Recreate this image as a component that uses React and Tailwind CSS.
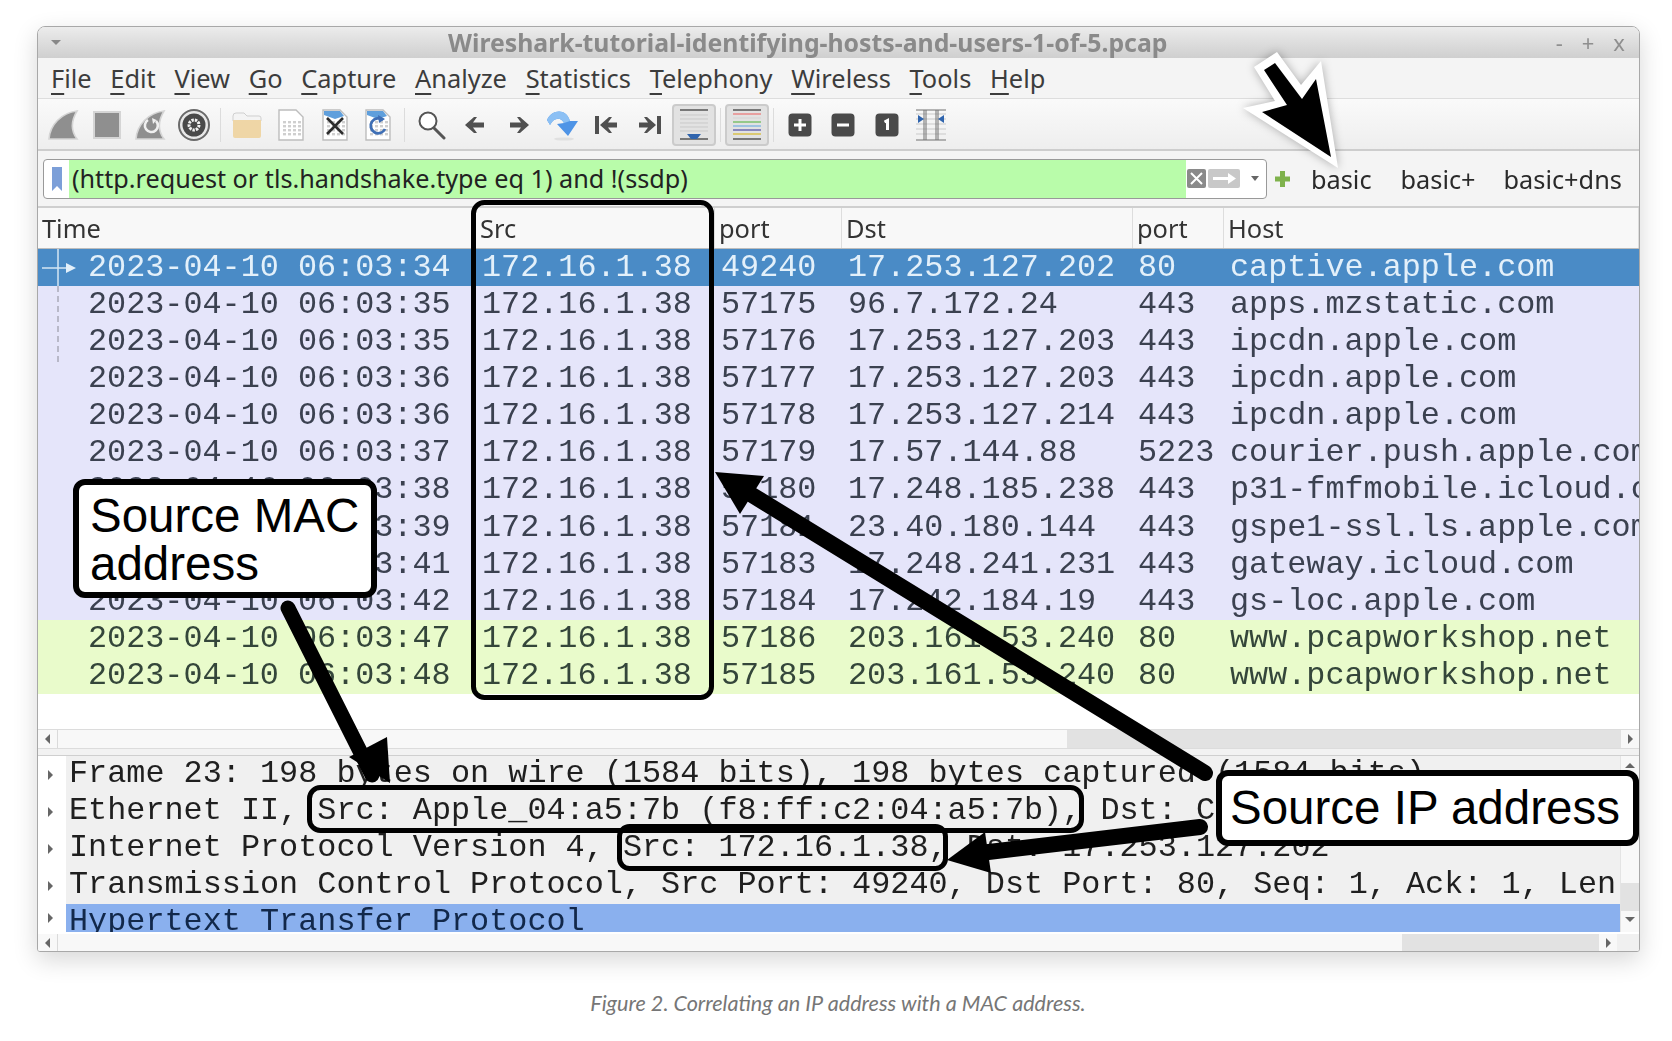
import React from "react";

const rows = [
  ["2023-04-10 06:03:34", "172.16.1.38", "49240", "17.253.127.202", "80", "captive.apple.com", "sel"],
  ["2023-04-10 06:03:35", "172.16.1.38", "57175", "96.7.172.24", "443", "apps.mzstatic.com", "tls"],
  ["2023-04-10 06:03:35", "172.16.1.38", "57176", "17.253.127.203", "443", "ipcdn.apple.com", "tls"],
  ["2023-04-10 06:03:36", "172.16.1.38", "57177", "17.253.127.203", "443", "ipcdn.apple.com", "tls"],
  ["2023-04-10 06:03:36", "172.16.1.38", "57178", "17.253.127.214", "443", "ipcdn.apple.com", "tls"],
  ["2023-04-10 06:03:37", "172.16.1.38", "57179", "17.57.144.88", "5223", "courier.push.apple.com", "tls"],
  ["2023-04-10 06:03:38", "172.16.1.38", "57180", "17.248.185.238", "443", "p31-fmfmobile.icloud.com", "tls"],
  ["2023-04-10 06:03:39", "172.16.1.38", "57181", "23.40.180.144", "443", "gspe1-ssl.ls.apple.com", "tls"],
  ["2023-04-10 06:03:41", "172.16.1.38", "57183", "17.248.241.231", "443", "gateway.icloud.com", "tls"],
  ["2023-04-10 06:03:42", "172.16.1.38", "57184", "17.242.184.19", "443", "gs-loc.apple.com", "tls"],
  ["2023-04-10 06:03:47", "172.16.1.38", "57186", "203.161.53.240", "80", "www.pcapworkshop.net", "http"],
  ["2023-04-10 06:03:48", "172.16.1.38", "57185", "203.161.53.240", "80", "www.pcapworkshop.net", "http"],
];

const rowStyle = {
  sel: "bg-[#4a8bc6] text-[#e3f0fa]",
  tls: "bg-[#e5e5fa] text-[#3b4150]",
  http: "bg-[#e9fbcb] text-[#34463a]",
};

const details = [
  "Frame 23: 198 bytes on wire (1584 bits), 198 bytes captured (1584 bits)",
  "Ethernet II, Src: Apple_04:a5:7b (f8:ff:c2:04:a5:7b), Dst: Cisco_b0:12:34 (00:00:0c:b0:12:34)",
  "Internet Protocol Version 4, Src: 172.16.1.38, Dst: 17.253.127.202",
  "Transmission Control Protocol, Src Port: 49240, Dst Port: 80, Seq: 1, Ack: 1, Len: 144",
];

const gridCols = "grid grid-cols-[438px_239px_127px_291px_91px_1fr]";

function Menu({ label }) {
  return (
    <span className="text-[#3c3c3c]">
      <span className="underline underline-offset-[5px] decoration-[2px]">{label[0]}</span>
      {label.slice(1)}
    </span>
  );
}

function Sep() {
  return (
    <div className="w-[9px] flex justify-center">
      <div className="w-px h-[34px] bg-[#dcdcdc]" />
    </div>
  );
}

function Cell({ children, active }) {
  return (
    <div
      className={
        "w-[43.8px] h-[42px] flex items-center justify-center rounded-[4px] " +
        (active ? "bg-[#e2e2e2] border-2 border-[#cbcbcb]" : "")
      }
    >
      {children}
    </div>
  );
}

const Fin = ({ children }) => (
  <svg width="32" height="32" viewBox="0 0 32 32">
    <path d="M2 30C3 16 14 4 30 2C24 12 24 22 30 30Z" fill="#8f8f8f" stroke="#d5d5d5" strokeWidth="1.6" />
    {children}
  </svg>
);

const Sheet = ({ children, fill = "#fff", blue }) => (
  <svg width="28" height="32" viewBox="0 0 28 32">
    <path d="M2 1H19L26 8V31H2Z" fill={fill} stroke="#bdbdbd" strokeWidth="1.4" />
    {blue && <path d="M3 2H19L23 7L14 10L3 6Z" fill="#5f9fdc" />}
    <g fill="#cfcfcf">
      {[12, 16, 20, 24].map((y) =>
        [6, 11, 16, 21].map((x) => <rect key={x + "-" + y} x={x} y={y} width="3" height="2.4" />)
      )}
    </g>
    {children}
  </svg>
);

const Square = ({ children }) => (
  <svg width="24" height="24" viewBox="0 0 24 24">
    <rect x="0.5" y="0.5" width="23" height="23" rx="4" fill="#4a4a4a" />
    {children}
  </svg>
);

const Arrow = ({ d }) => (
  <svg width="24" height="22" viewBox="0 0 24 22">
    <path d={d} fill="#505050" />
  </svg>
);

function Toolbar() {
  return (
    <div className="h-[52px] shrink-0 pl-[3px] pt-[1px] flex items-center bg-gradient-to-b from-[#fafafa] to-[#eeeeee] border-b-2 border-[#cdcdcd]">
      <Cell><Fin /></Cell>
      <Cell>
        <div className="w-[28px] h-[28px] bg-[#8f8f8f] border-2 border-[#d5d5d5]" />
      </Cell>
      <Cell>
        <Fin>
          <path d="M22 12A6.5 6.5 0 1 1 14 11" fill="none" stroke="#f0f0f0" strokeWidth="2.6" />
          <path d="M19 15L22.5 11L18 9" fill="#f0f0f0" />
        </Fin>
      </Cell>
      <Cell>
        <svg width="32" height="32" viewBox="0 0 32 32">
          <circle cx="16" cy="16" r="15" fill="#e8e8e8" stroke="#6a6a6a" strokeWidth="2" />
          <circle cx="16" cy="16" r="11.5" fill="#4a4a4a" />
          <circle cx="16" cy="16" r="5" fill="none" stroke="#f2f2f2" strokeWidth="3" strokeDasharray="2.4 1" />
        </svg>
      </Cell>
      <Sep />
      <Cell>
        <svg width="30" height="28" viewBox="0 0 30 28">
          <path d="M1 5Q1 2 4 2H12L15 5H27Q29 5 29 7V10H1Z" fill="#f4f4f4" stroke="#cfcfcf" />
          <path d="M1 9H29V25Q29 27 27 27H3Q1 27 1 25Z" fill="#efd6a6" />
        </svg>
      </Cell>
      <Cell><Sheet /></Cell>
      <Cell>
        <Sheet blue>
          <path d="M6 9L22 25M22 9L6 25" stroke="#2d2d2d" strokeWidth="2.6" />
        </Sheet>
      </Cell>
      <Cell>
        <Sheet blue>
          <path d="M19 11A7.5 7.5 0 1 0 21 20" fill="none" stroke="#3f6fb5" strokeWidth="2.8" />
          <path d="M14 6L21 10L15 14Z" fill="#3f6fb5" />
        </Sheet>
      </Cell>
      <Sep />
      <Cell>
        <svg width="30" height="30" viewBox="0 0 30 30">
          <circle cx="12" cy="11" r="8.5" fill="#fff" stroke="#555" strokeWidth="2" />
          <path d="M18 18L28 28" stroke="#555" strokeWidth="3" strokeLinecap="round" />
        </svg>
      </Cell>
      <Cell><Arrow d="M2 11L11 3H14L10 8.5H21V13.5H10L14 19H11Z" /></Cell>
      <Cell><Arrow d="M22 11L13 3H10L14 8.5H3V13.5H14L10 19H13Z" /></Cell>
      <Cell>
        <svg width="34" height="32" viewBox="0 0 34 32">
          <ellipse cx="18" cy="30" rx="10" ry="1.6" fill="#e0e0e0" />
          <path d="M1 11C5 1 20 -2 24 12L32 12L22 27L11 15L18 14C15 8 8 8 4 16Z" fill="#4f94e6" />
          <path d="M1 11C5 1 20 -2 24 12L18 14C15 8 8 8 4 16Z" fill="#8cc0f4" />
        </svg>
      </Cell>
      <Cell><Arrow d="M1 2H5V20H1ZM6 11L15 3H18L14 8.5H23V13.5H14L18 19H15Z" /></Cell>
      <Cell><Arrow d="M23 2H19V20H23ZM18 11L9 3H6L10 8.5H1V13.5H10L6 19H9Z" /></Cell>
      <Cell active>
        <svg width="32" height="34" viewBox="0 0 32 34">
          <path d="M2 2H30" stroke="#555" strokeWidth="1.6" />
          <path d="M2 7H30M2 11H30M2 15H30M2 19H30M2 23H30" stroke="#c9c9c9" />
          <path d="M2 31H30" stroke="#555" strokeWidth="1.6" />
          <path d="M9 26H23L19 31H13Z" fill="#2f64ad" />
        </svg>
      </Cell>
      <Sep />
      <Cell active>
        <svg width="32" height="34" viewBox="0 0 32 34" strokeWidth="1.5">
          <path d="M2 2H30" stroke="#555" />
          <path d="M2 6H30" stroke="#e88a8a" />
          <path d="M2 10H30" stroke="#d8d8d8" />
          <path d="M2 14H30" stroke="#7cc06c" />
          <path d="M2 18H30" stroke="#88b8e0" />
          <path d="M2 22H30" stroke="#6a68b0" />
          <path d="M2 26H30" stroke="#d8c04c" />
          <path d="M2 31H30" stroke="#555" />
        </svg>
      </Cell>
      <Sep />
      <Cell>
        <Square><path d="M12 6V18M6 12H18" stroke="#fff" strokeWidth="3" /></Square>
      </Cell>
      <Cell>
        <Square><path d="M6 12H18" stroke="#fff" strokeWidth="3" /></Square>
      </Cell>
      <Cell>
        <Square><path d="M9.5 9L12.5 7.5V17" stroke="#fff" strokeWidth="3" fill="none" /></Square>
      </Cell>
      <Cell>
        <svg width="30" height="32" viewBox="0 0 30 32">
          <path d="M0 5H30M0 10H30M0 15H30M0 20H30M0 25H30" stroke="#c9c9c9" />
          <path d="M0 1H30M0 31H30M8 1V31M22 1V31M10 1V31M20 1V31" stroke="#707070" strokeWidth="1" />
          <path d="M2 6L8 10L2 14ZM28 6L22 10L28 14Z" fill="#2f64ad" />
        </svg>
      </Cell>
    </div>
  );
}

function ScrollBar({ thumbClass, thumbStart, small }) {
  return (
    <div className={"flex items-stretch shrink-0 bg-[#f8f8f8] " + (small ? "h-[18px]" : "h-[20px] border-y border-[#dcdcdc]")}>
      <div className="w-[20px] flex items-center justify-center border-r border-[#dadada]">
        <span className="w-0 h-0 border-y-[5px] border-y-transparent border-r-[5px] border-r-[#666]" />
      </div>
      <div className={thumbStart} />
      <div className={thumbClass} />
      <div className="w-[18px] flex items-center justify-center">
        <span className="w-0 h-0 border-y-[5px] border-y-transparent border-l-[5px] border-l-[#666]" />
      </div>
      {small && <div className="w-[22px] bg-[#f0f0f0]" />}
    </div>
  );
}

function Callout({ className, children }) {
  return (
    <div
      className={
        "absolute z-20 bg-white border-[6px] border-black rounded-[12px] font-['Liberation_Sans',sans-serif] text-[47.5px] leading-[48px] text-black " +
        className
      }
    >
      {children}
    </div>
  );
}

export default function App() {
  return (
    <div className="relative w-[1672px] h-[1041px] overflow-hidden bg-white">
      <div className="ml-[37px] mt-[26px] w-[1603px] h-[926px] flex flex-col bg-white border border-[#a8a8a8] rounded-t-[8px] rounded-b-[3px] overflow-hidden shadow-[0_8px_24px_rgba(0,0,0,0.16)] font-['Noto_Sans',sans-serif] blur-[0.5px]">
        <div className="h-[31px] shrink-0 relative flex items-center bg-gradient-to-b from-[#ececec] to-[#cfcfcf]">
          <span className="ml-[13px] w-0 h-0 border-x-[5px] border-x-transparent border-t-[5px] border-t-[#888]" />
          <span className="ml-[387px] text-[24.8px] font-bold text-[#8a8a8a] whitespace-nowrap">
            Wireshark-tutorial-identifying-hosts-and-users-1-of-5.pcap
          </span>
          <span className="ml-auto mr-[14px] flex gap-[19px] text-[22px] text-[#8f8f8f]">
            <span>-</span>
            <span>+</span>
            <span>x</span>
          </span>
        </div>

        <div className="h-[41px] shrink-0 pl-[13px] flex items-center gap-[18.7px] text-[25.4px] bg-[#f4f4f4] border-b border-[#dddddd]">
          {["File", "Edit", "View", "Go", "Capture", "Analyze", "Statistics", "Telephony", "Wireless", "Tools", "Help"].map((m) => (
            <Menu key={m} label={m} />
          ))}
        </div>

        <Toolbar />

        <div className="h-[57px] shrink-0 flex items-center pl-[5px] bg-[#f4f4f4] border-b-2 border-[#cfcfcf]">
          <div className="w-[1224px] h-[40px] flex items-stretch bg-white border border-[#999] rounded-[4px] overflow-hidden">
            <div className="w-[25px] flex items-center justify-center">
              <svg width="10" height="24" viewBox="0 0 10 24">
                <path d="M0 0H10V24L5 19L0 24Z" fill="#7c9fd8" />
              </svg>
            </div>
            <div className="w-[1117px] pl-[3px] flex items-center bg-[#b9fcaa] text-[25.2px] text-[#222] whitespace-nowrap">
              (http.request or tls.handshake.type eq 1) and !(ssdp)
            </div>
            <div className="flex items-center pl-[1px]">
              <svg width="19" height="19" viewBox="0 0 19 19">
                <rect width="19" height="19" rx="2" fill="#8a8a8a" />
                <path d="M4 4L15 15M15 4L4 15" stroke="#fff" strokeWidth="2" />
              </svg>
              <svg className="ml-[2px]" width="32" height="19" viewBox="0 0 32 19">
                <rect width="32" height="19" rx="2" fill="#c8c8c8" />
                <path d="M5 8H20V4L28 9.5L20 15V11H5Z" fill="#fff" />
              </svg>
              <span className="ml-[11px] w-0 h-0 border-x-[4px] border-x-transparent border-t-[5px] border-t-[#666]" />
            </div>
          </div>
          <svg className="ml-[8px]" width="15" height="16" viewBox="0 0 15 16">
            <path d="M5 0H10V5.5H15V10.5H10V16H5V10.5H0V5.5H5Z" fill="#7fb24c" />
          </svg>
          <span className="ml-[21px] pt-[2px] text-[25.3px] text-[#2a2a2a]">basic</span>
          <span className="ml-[29px] pt-[2px] text-[25.3px] text-[#2a2a2a]">basic+</span>
          <span className="ml-[28px] pt-[2px] text-[25.3px] text-[#2a2a2a]">basic+dns</span>
        </div>

        <div className={gridCols + " h-[41px] shrink-0 bg-[#f8f8f8] border-b border-[#bdbdbd] text-[25.4px] text-[#333]"}>
          {["Time", "Src", "port", "Dst", "port", "Host"].map((h, i) => (
            <div key={i} className="pl-[4px] flex items-center border-r border-[#dddddd]">
              {h}
            </div>
          ))}
        </div>

        <div className="h-[445px] shrink-0 font-['Liberation_Mono',monospace] text-[31.8px] leading-[39px]">
          {rows.map((r, i) => (
            <div key={i} className={gridCols + " h-[37.08px] items-start whitespace-pre overflow-hidden " + rowStyle[r[6]]}>
              <div className="pl-[50px]">{r[0]}</div>
              <div className="pl-[6px]">{r[1]}</div>
              <div className="pl-[6px]">{r[2]}</div>
              <div className="pl-[6px]">{r[3]}</div>
              <div className="pl-[5px]">{r[4]}</div>
              <div className="pl-[6px] overflow-hidden">{r[5]}</div>
            </div>
          ))}
        </div>

        <div className="h-[35px] shrink-0 bg-white" />
        <ScrollBar thumbStart="w-[1009px]" thumbClass="flex-1 bg-[#e2e2e2]" />
        <div className="h-[7px] shrink-0 bg-[#f2f2f2] border-b border-[#cfcfcf]" />

        <div className="h-[176px] shrink-0 flex font-['Liberation_Mono',monospace] text-[31.83px] text-[#1f1f1f]">
          <div className="flex-1 min-w-0 overflow-hidden">
            {details.map((d) => (
              <div key={d} className="h-[37px] flex items-center whitespace-pre">
                <div className="w-[28px] h-full shrink-0 bg-white flex items-center pl-[10px]">
                  <span className="w-0 h-0 border-y-[5px] border-y-transparent border-l-[5px] border-l-[#666]" />
                </div>
                <div className="flex-1 h-full bg-[#f0f0f0] pl-[3px] leading-[37px]">{d}</div>
              </div>
            ))}
            <div className="h-[28px] flex whitespace-pre">
              <div className="w-[28px] h-full shrink-0 bg-white flex items-center pl-[10px]">
                <span className="w-0 h-0 border-y-[5px] border-y-transparent border-l-[5px] border-l-[#666]" />
              </div>
              <div className="flex-1 bg-[#8ab0ee] pl-[3px] leading-[37px] overflow-hidden text-[#12284a]">Hypertext Transfer Protocol</div>
            </div>
          </div>
          <div className="w-[19px] shrink-0 bg-[#f8f8f8] flex flex-col items-center border-l border-[#e4e4e4]">
            <span className="mt-[7px] w-0 h-0 border-x-[5px] border-x-transparent border-b-[5px] border-b-[#666]" />
            <div className="mt-[115px] w-full h-[28px] bg-[#e2e2e2]" />
            <span className="mt-[6px] w-0 h-0 border-x-[5px] border-x-transparent border-t-[5px] border-t-[#666]" />
          </div>
        </div>
        <div className="h-[2px] shrink-0" />
        <ScrollBar small thumbStart="w-[1344px]" thumbClass="flex-1 bg-[#e2e2e2]" />
      </div>

      <p className="mt-[35px] pl-[4px] text-center text-[21.6px] italic text-[#767676] font-['Lato',sans-serif]">
        Figure 2. Correlating an IP address with a MAC address.
      </p>

      <svg className="absolute inset-0 z-10 pointer-events-none" width="1672" height="1041" viewBox="0 0 1672 1041">
        <g fill="none" stroke="#000">
          <rect x="473.5" y="202.5" width="238" height="495" rx="11" strokeWidth="5" />
          <rect x="309.5" y="787.5" width="772" height="43" rx="11" strokeWidth="5" />
          <rect x="619.5" y="826.5" width="326" height="42" rx="10" strokeWidth="5" />
        </g>
        <path d="M42 268H66" stroke="#d6e6f3" strokeWidth="1.5" />
        <path d="M66 263L76 268L66 273Z" fill="#e3f0fa" />
        <path d="M58 249V286" stroke="#d6e6f3" strokeWidth="1.5" />
        <path d="M58 286V362" stroke="#b8b8c8" strokeWidth="2" strokeDasharray="6 4" />

        <path className="drop-shadow-[0_0_5px_rgba(0,0,0,0.3)]" d="M1254 67L1277 52L1301 85L1321 61L1338 168L1243 108L1275 101Z" fill="#fff" />
        <path d="M1264 70L1275 63L1302 99L1316 79L1331 157L1262 112L1287 105Z" fill="#000" />

        <path d="M288 608L372 775" stroke="#000" strokeWidth="15" strokeLinecap="round" />
        <path d="M390 783L349 757L387 737Z" fill="#000" />

        <path d="M1205 773L752 495" stroke="#000" strokeWidth="16" strokeLinecap="round" />
        <path d="M715 472L764 476L740 514Z" fill="#000" />

        <path d="M1200 827L980 853" stroke="#000" strokeWidth="16" strokeLinecap="round" />
        <path d="M947 860L985 832L991 873Z" fill="#000" />
      </svg>

      <Callout className="left-[73px] top-[479px] w-[304px] h-[119px] pl-[11px] pt-[7px]">
        Source MAC<br />address
      </Callout>
      <Callout className="left-[1216px] top-[770px] w-[423px] h-[76px] pl-[8px] pt-[8px] whitespace-nowrap">
        Source IP address
      </Callout>
    </div>
  );
}
